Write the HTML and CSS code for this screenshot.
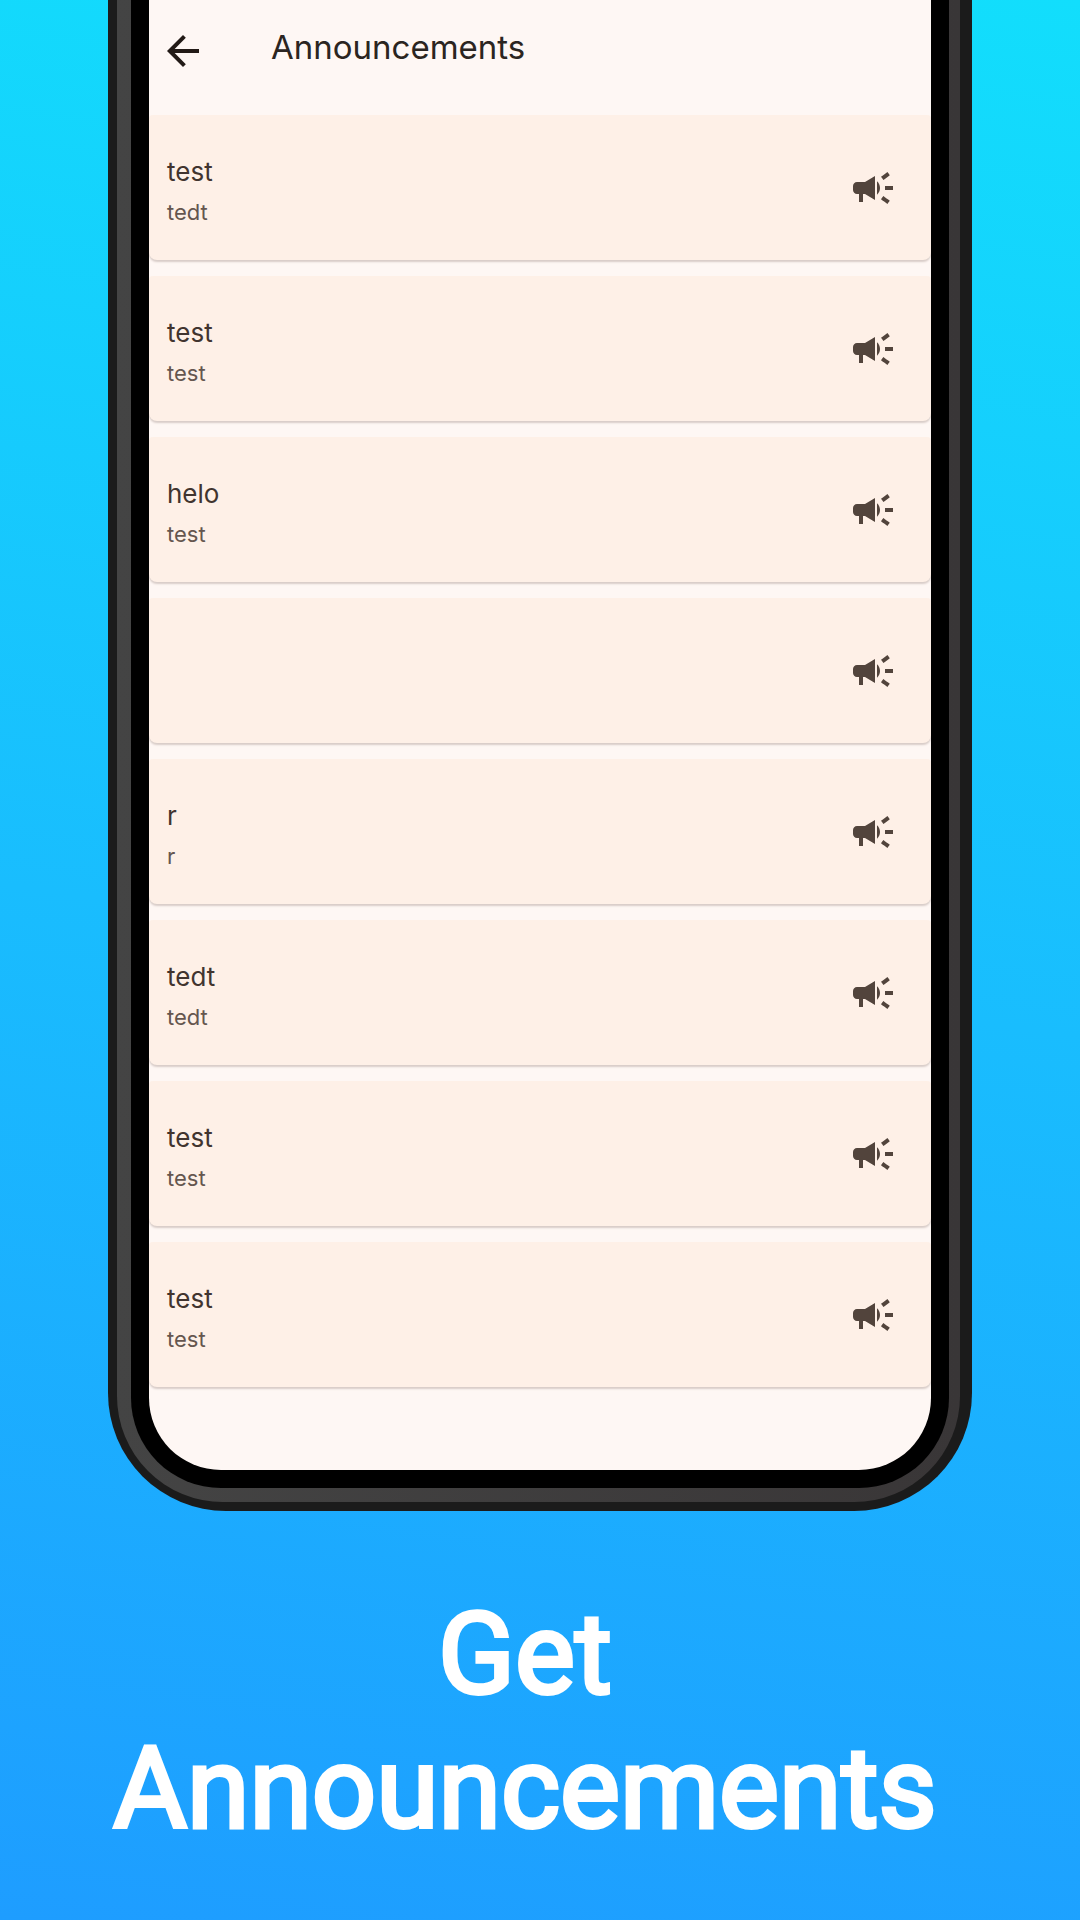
FILE: index.html
```html
<!DOCTYPE html>
<html lang="en">
<head>
<meta charset="utf-8">
<meta name="viewport" content="width=device-width, initial-scale=1">
<title>Get Announcements</title>
<link rel="stylesheet" href="styles.css">
</head>
<body>
<svg class="sprite" aria-hidden="true">
  <symbol id="campaign" viewBox="0 0 24 24">
    <path d="M18 11v2h4v-2h-4zm-2 6.61c.96.71 2.21 1.65 3.2 2.39.4-.53.8-1.07 1.2-1.6-.99-.74-2.24-1.68-3.2-2.4-.4.54-.8 1.08-1.2 1.61zM20.4 5.6c-.4-.53-.8-1.07-1.2-1.6-.99.74-2.24 1.68-3.2 2.4.4.53.8 1.07 1.2 1.6.96-.72 2.21-1.65 3.2-2.4zM4 9c-1.1 0-2 .9-2 2v2c0 1.1.9 2 2 2h1v4h2v-4h1l5 3V6L8 9H4zm11.5 3c0-1.33-.58-2.53-1.5-3.35v6.69c.92-.81 1.5-2.01 1.5-3.34z"/>
  </symbol>
</svg>
<main class="promo">
  <div class="phone">
    <div class="rim">
      <div class="bezel">
        <div class="screen">
          <header class="app-bar">
            <button class="back" type="button" aria-label="Back">
              <svg viewBox="0 0 24 24"><path d="M20 11H7.83l5.59-5.59L12 4l-8 8 8 8 1.41-1.41L7.83 13H20v-2z"/></svg>
            </button>
            <h1 class="app-title">Announcements</h1>
          </header>
          <ul class="list">
            <li class="card"><div class="text"><h2 class="title">test</h2><p class="body">tedt</p></div><svg class="icon"><use href="#campaign"/></svg></li>
            <li class="card"><div class="text"><h2 class="title">test</h2><p class="body">test</p></div><svg class="icon"><use href="#campaign"/></svg></li>
            <li class="card"><div class="text"><h2 class="title">helo</h2><p class="body">test</p></div><svg class="icon"><use href="#campaign"/></svg></li>
            <li class="card"><div class="text"></div><svg class="icon"><use href="#campaign"/></svg></li>
            <li class="card"><div class="text"><h2 class="title">r</h2><p class="body">r</p></div><svg class="icon"><use href="#campaign"/></svg></li>
            <li class="card"><div class="text"><h2 class="title">tedt</h2><p class="body">tedt</p></div><svg class="icon"><use href="#campaign"/></svg></li>
            <li class="card"><div class="text"><h2 class="title">test</h2><p class="body">test</p></div><svg class="icon"><use href="#campaign"/></svg></li>
            <li class="card"><div class="text"><h2 class="title">test</h2><p class="body">test</p></div><svg class="icon"><use href="#campaign"/></svg></li>
          </ul>
        </div>
      </div>
    </div>
  </div>
  <p class="caption">Get<br>Announcements</p>
</main>
</body>
</html>
```

FILE: styles.css
```css
* {
  box-sizing: border-box;
  margin: 0;
  padding: 0;
}

body {
  font-family: Inter, "Noto Sans", sans-serif;
  background: #1e9fff;
}

.sprite {
  display: none;
}

.promo {
  min-height: 100vh;
  padding: 0 10%;
  background: linear-gradient(188deg, #12defc 0%, #19bdfe 50%, #1e9dff 100%);
}

/* Handset frame, open at the top edge */
.phone {
  padding: 0 12px 9px 9px;
  border-radius: 0 0 118px 118px;
  background: #1b1b1b;
}

.rim {
  padding: 0 11px 14px 14px;
  border-radius: 0 0 106px 106px;
  background: linear-gradient(90deg, #444444, #393637);
}

.bezel {
  padding: 0 18px 18px;
  border-radius: 0 0 90px 90px;
  background: #000;
}

.screen {
  padding-bottom: 83px;
  border-radius: 0 0 72px 72px;
  background: #fef7f4;
  overflow: hidden;
}

.app-bar {
  display: flex;
  align-items: center;
  gap: 66px;
  height: 115px;
  padding: 0 12px 14px;
}

.back {
  display: flex;
  width: 44px;
  height: 48px;
  border: 0;
  background: none;
  align-items: center;
  justify-content: center;
}

.back svg {
  flex: none;
  width: 48px;
  height: 48px;
  fill: #221a16;
}

.app-title {
  padding-bottom: 8px;
  font-size: 33px;
  line-height: 44px;
  font-weight: 400;
  color: #2b2521;
}

.list {
  display: grid;
  gap: 16px;
  list-style: none;
}

.card {
  display: flex;
  align-items: center;
  justify-content: space-between;
  height: 145px;
  padding: 4px 34px 4px 18px;
  border-radius: 4px 4px 8px 8px;
  background: #fef0e7;
  box-shadow: 0 2px 2px #d8ccc8;
}

.text {
  padding-top: 8px;
}

.title {
  font-size: 26px;
  line-height: 40px;
  font-weight: 400;
  color: #41342f;
}

.body {
  font-size: 22px;
  line-height: 40px;
  color: #65564f;
}

.icon {
  width: 48px;
  height: 48px;
  fill: #52443c;
}

.caption {
  padding: 77px 30px 0 0;
  font-family: Roboto, sans-serif;
  font-size: 113px;
  line-height: 134px;
  font-weight: 400;
  color: #fff;
  -webkit-text-stroke: 4px #fff;
  text-align: center;
}
```
